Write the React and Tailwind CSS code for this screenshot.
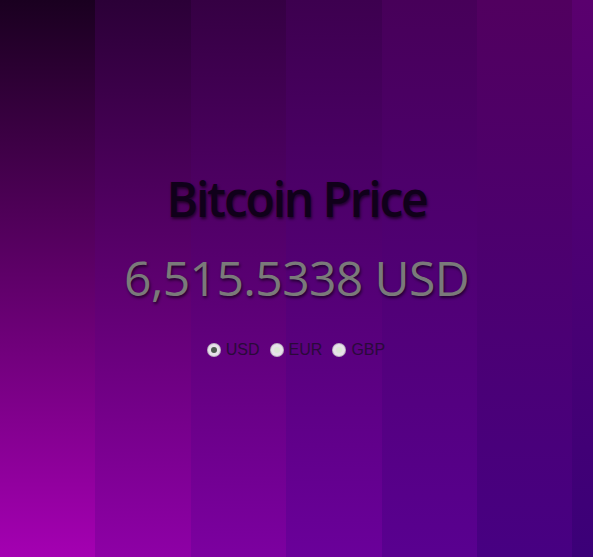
const stripes = [
  ['#1a0020', '#a400b2'],
  ['#2b0037', '#8e00a6'],
  ['#350043', '#7c00a0'],
  ['#3d004f', '#6a009a'],
  ['#470059', '#590090'],
  ['#51005f', '#470082'],
  ['#5a006e', '#3b0078'],
];

const currencies = ['USD', 'EUR', 'GBP'];

export default function App() {
  return (
    <div className="relative h-[557px] w-full overflow-hidden" style={{ fontFamily: '"Open Sans", "Noto Sans", sans-serif' }}>
      <div className="absolute inset-0 flex">
        {stripes.map(([top, bottom], i) => (
          <div
            key={i}
            className={i === stripes.length - 1 ? 'flex-1' : 'w-[95.4px] shrink-0'}
            style={{ background: `linear-gradient(to bottom, ${top}, ${bottom})` }}
          />
        ))}
      </div>

      <main className="relative flex flex-col items-center pt-[169px]">
        <h1 className="text-[48px] leading-[60px] font-semibold tracking-[-2.2px] text-[#10001a] [text-shadow:1px_2px_3px_rgba(0,0,0,0.6)]">
          Bitcoin Price
        </h1>
        <div className="mt-[19px] text-[48px] leading-[60px] font-normal tracking-[-0.6px] text-[#7a7a7a] [text-shadow:1px_2px_3px_rgba(0,0,0,0.6)]">
          6,515.5338 USD
        </div>

        <div className="mt-[30px] flex items-center gap-[11px] text-[16px] leading-[24px] text-[#2a0a3a]" style={{ fontFamily: '"Liberation Sans", Arial, sans-serif' }}>
          {currencies.map((c, i) => (
            <label key={c} className="flex items-center gap-[6px]">
              <span className="flex h-[12px] w-[12px] items-center justify-center rounded-full bg-[#e8e2ea] ring-1 ring-[#bdb3c2]">
                {i === 0 ? (
                  <span className="h-[6px] w-[6px] rounded-full bg-[#4f5a50]" />
                ) : (
                  <span className="h-[6px] w-[6px] rounded-full bg-[#dde6d8]" />
                )}
              </span>
              <span>{c}</span>
            </label>
          ))}
        </div>
      </main>
    </div>
  );
}
